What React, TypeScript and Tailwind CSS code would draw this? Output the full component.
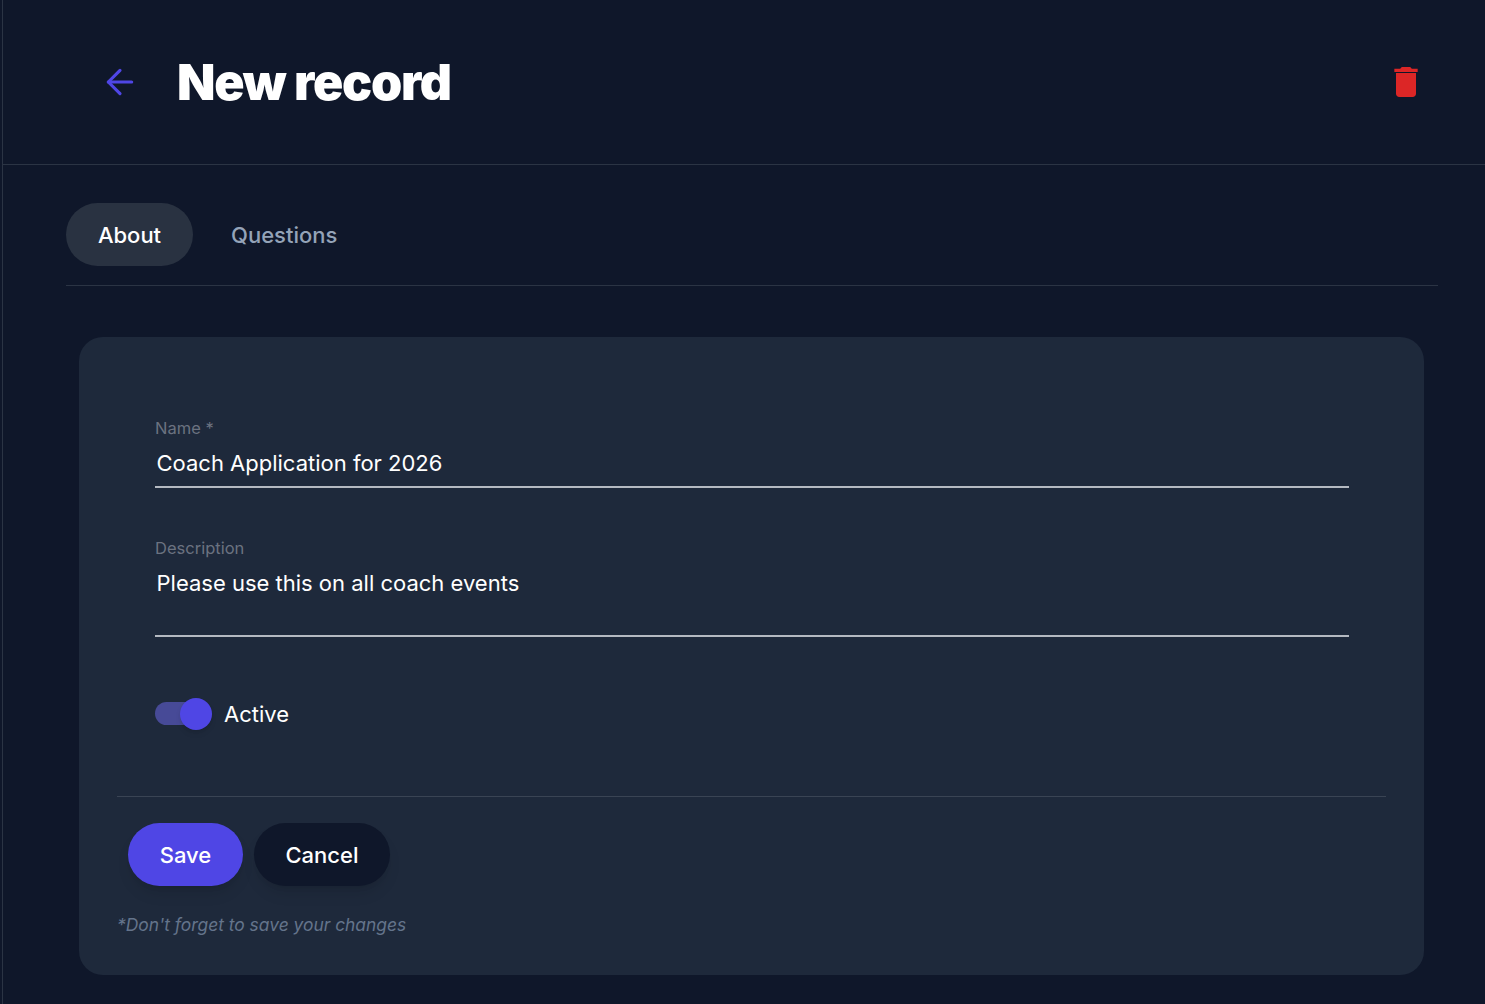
import { ArrowLeft } from 'lucide-react';

function TrashIcon() {
  return (
    <svg viewBox="0 0 24 24" className="w-[40px] h-[40px] text-[#dc2626]" fill="currentColor">
      <path d="M6 19c0 1.100.9 2 2 2h8c1.100 0 2-.9 2-2V6.600H6V19zM19 4h-3.500l-1-1h-5l-1 1H5v2h14V4z" />
    </svg>
  );
}

function Field({ label, value, tall }: { label: string; value: string; tall?: boolean }) {
  return (
    <div className={`border-b-2 border-[#b4b9c1] ${tall ? 'h-[100px]' : 'h-[71px]'}`}>
      <div className="pt-[1px] text-[16.500px] leading-[20px] text-[#6b7280]">{label}</div>
      <div className="mt-[9px] pl-[1.500px] text-[22px] leading-[32px] text-white">{value}</div>
    </div>
  );
}

export default function App() {
  return (
    <div className="min-h-[1004px] bg-[#0f172a] pl-[2px] font-['Inter',sans-serif] overflow-hidden">
      <div className="border-l border-[#2b3444] h-[1004px]">
        {/* Header */}
        <header className="h-[165px] border-b border-[#2b3444] flex items-center justify-between pl-[97px] pr-[59.500px]">
          <div className="flex items-center gap-[37px]">
            <ArrowLeft className="w-[40px] h-[40px] text-[#4f46e5]" strokeWidth={1.900} />
            <h1 className="text-[50px] leading-[60px] font-black tracking-[-0.025em] text-white">New record</h1>
          </div>
          <TrashIcon />
        </header>

        {/* Tabs */}
        <div className="ml-[63px] mr-[47px] pt-[38px] pb-[19px] border-b border-[#2b3444] flex items-center gap-[6px]">
          <button className="h-[63px] w-[127px] pt-[2px] rounded-full bg-[#293241] text-white text-[22px] font-medium">About</button>
          <button className="h-[63px] px-[32px] pt-[2px] text-[#94a3b8] text-[22px] font-medium">Questions</button>
        </div>

        {/* Card */}
        <div className="mt-[51px] ml-[76px] mr-[61px] h-[638px] rounded-[24px] bg-[#1e293b] px-[38px] pt-[80px]">
          <div className="pl-[38px] pr-[37px] flex flex-col gap-[49px]">
            <Field label="Name *" value="Coach Application for 2026" />
            <Field label="Description" value="Please use this on all coach events" tall />
          </div>

          <div className="mt-[61px] pl-[38px] flex items-center gap-[12px]">
            <div className="relative w-[57px] h-[32px] flex items-center">
              <div className="w-[50px] h-[23px] mb-[1px] rounded-full bg-[#474a97]" />
              <div className="absolute right-0 top-0 w-[32px] h-[32px] rounded-full bg-[#4f46e5] shadow-md" />
            </div>
            <span className="text-[22px] leading-[32px] text-white">Active</span>
          </div>

          <div className="mt-[66px] border-t border-[#3a4454] pt-[26px] pl-[11px] flex gap-[11px]">
            <button className="h-[63px] w-[115px] pt-[2px] rounded-full bg-[#4f46e5] text-white text-[22px] font-medium shadow-lg">Save</button>
            <button className="h-[63px] w-[136px] pt-[2px] rounded-full bg-[#0f172a] text-white text-[22px] font-medium shadow-lg">Cancel</button>
          </div>

          <p className="mt-[25px] text-[17.400px] leading-[28px] italic text-[#64748b]">*Don't forget to save your changes</p>
        </div>
      </div>
    </div>
  );
}
